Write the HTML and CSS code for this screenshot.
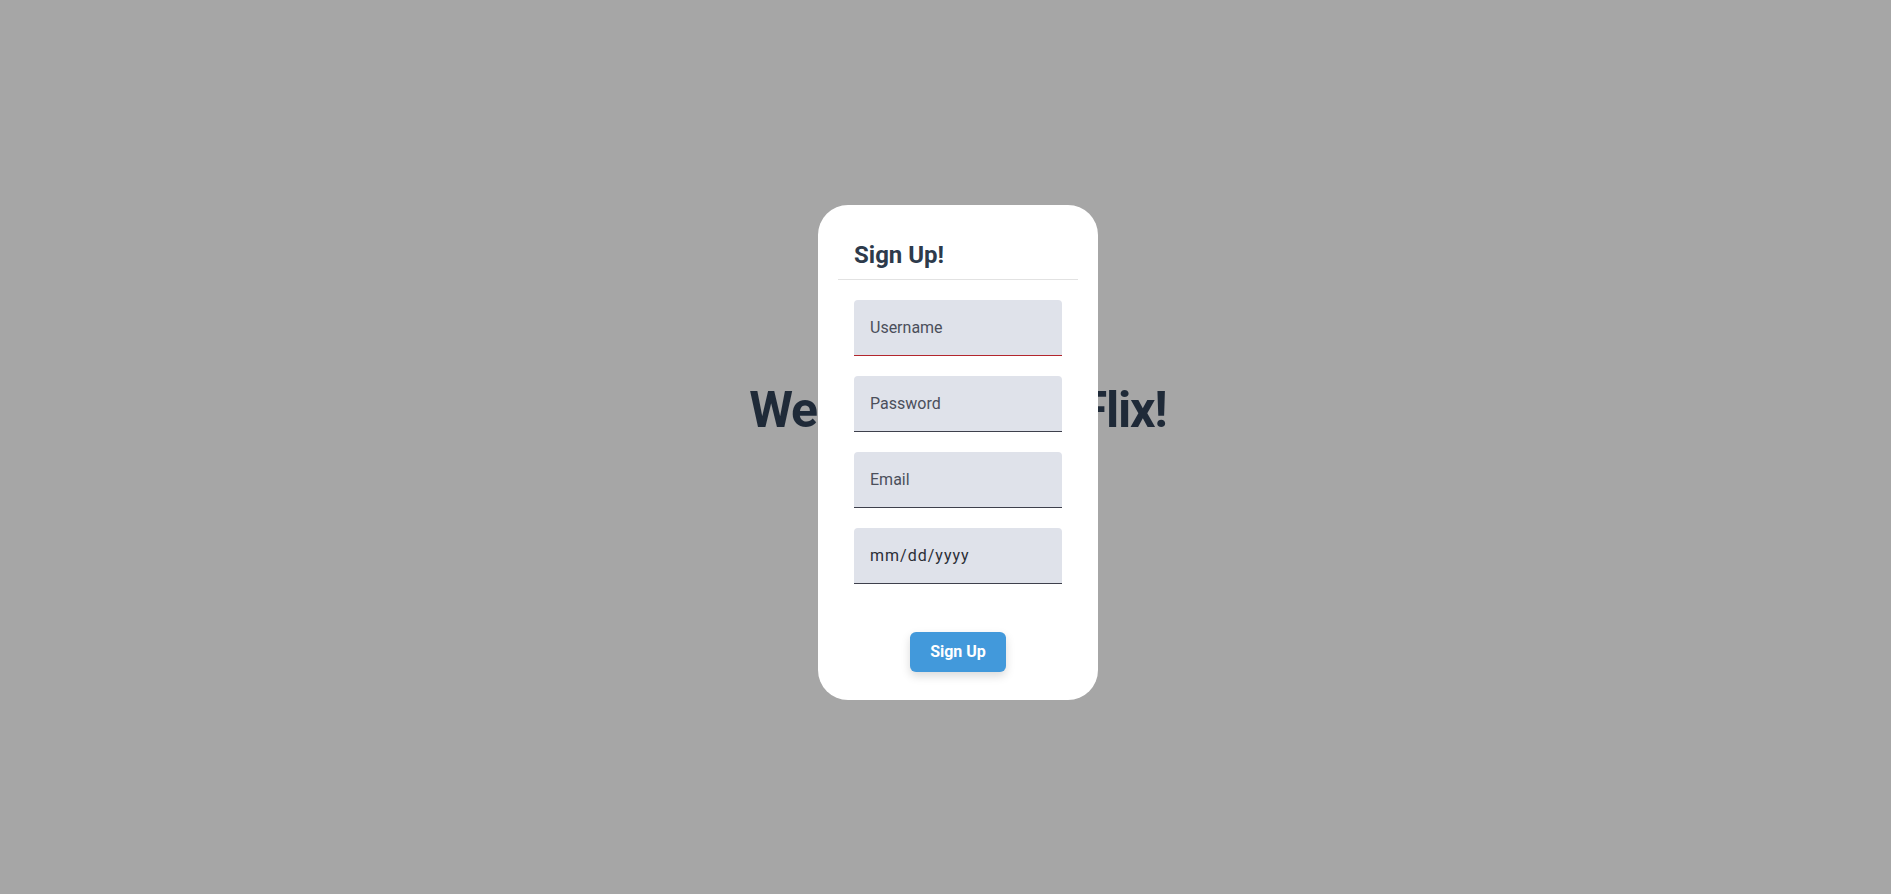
FILE: index.html
```html
<!DOCTYPE html>
<html lang="en">
<head>
<meta charset="utf-8">
<title>MyFlix</title>
<link rel="stylesheet" href="styles.css">
</head>
<body>
<main class="page">
  <h1 class="welcome">Welcome to MyFlix!</h1>
</main>
<div class="overlay">
  <section class="card">
    <header class="card-header">
      <h2 class="card-title">Sign Up!</h2>
    </header>
    <form class="card-body">
      <input class="field field-invalid" type="text" placeholder="Username">
      <input class="field" type="password" placeholder="Password">
      <input class="field" type="email" placeholder="Email">
      <input class="field field-date" type="text" placeholder="mm/dd/yyyy">
      <div class="actions">
        <button class="btn" type="button">Sign Up</button>
      </div>
    </form>
  </section>
</div>
</body>
</html>
```
FILE: styles.css
```css
* { box-sizing: border-box; }
html, body { height: 100%; }
body {
  margin: 0;
  background: #a6a6a6;
  font-family: Roboto, "Liberation Sans", sans-serif;
  overflow: hidden;
}
.page {
  display: flex;
  justify-content: center;
  padding: 380px 0 0 25px;
}
.welcome {
  margin: 0;
  font-size: 50px;
  line-height: 60px;
  font-weight: 700;
  letter-spacing: -1.2px;
  color: #1f2a38;
}
.overlay {
  position: fixed;
  inset: 0;
  display: flex;
  justify-content: center;
  align-items: flex-start;
  padding: 205px 0 0 25px;
}
.card {
  width: 280px;
  background: #fff;
  border-radius: 30px;
  padding: 36px 20px 28px;
}
.card-header {
  padding: 0 16px 9px;
  border-bottom: 1px solid #e2e2e2;
}
.card-title {
  margin: 0;
  font-size: 24px;
  line-height: 28.8px;
  font-weight: 700;
  color: #2d3a4b;
}
.card-body {
  display: flex;
  flex-direction: column;
  gap: 20px;
  padding: 20px 16px 0;
}
.field {
  display: block;
  width: 100%;
  height: 56px;
  padding: 0 16px;
  border: none;
  border-bottom: 1px solid #3e404c;
  border-radius: 4px 4px 0 0;
  background: #dfe2ea;
  font-family: Roboto, "Liberation Sans", sans-serif;
  font-size: 16px;
  color: #2b2e36;
  outline: none;
}
.field::placeholder { color: #4b4f5b; opacity: 1; }
.field-invalid { border-bottom-color: #b3262d; }
.field-date::placeholder { color: #2b2e36; letter-spacing: 1px; }
.actions {
  display: flex;
  justify-content: center;
  padding-top: 28px;
}
.btn {
  height: 40px;
  padding: 0 20px;
  border: none;
  border-radius: 6px;
  background: #4299db;
  color: #fff;
  font-family: Roboto, "Liberation Sans", sans-serif;
  font-size: 16px;
  font-weight: 700;
  box-shadow: 0 4px 10px rgba(0, 0, 0, 0.15);
}
```
